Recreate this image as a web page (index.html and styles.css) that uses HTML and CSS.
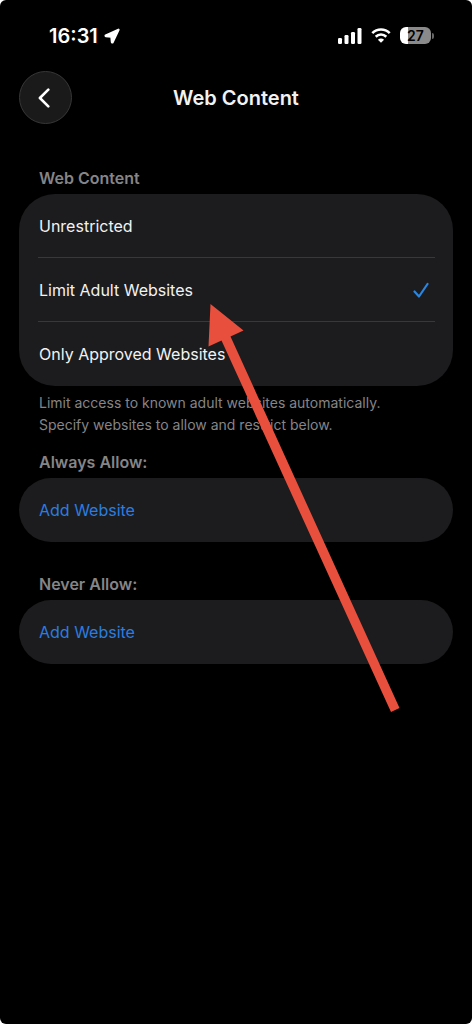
FILE: index.html
```html
<!DOCTYPE html>
<html lang="en">
<head>
<meta charset="utf-8">
<meta name="viewport" content="width=device-width, initial-scale=1">
<title>Web Content</title>
<link rel="stylesheet" href="styles.css">
</head>
<body>
<div class="screen">
  <div class="status">
    <div class="status-side">
      <span class="time">16:31</span>
      <svg class="location" viewBox="0 0 16 16" aria-hidden="true"><path d="M14.400 1.400 1.600 7.200C1.100 7.500 1.200 8.300 1.800 8.400L7.100 9 7.600 14.200C7.700 14.900 8.600 15 8.900 14.400L14.800 1.800C14.900 1.500 14.700 1.300 14.400 1.400Z"/></svg>
    </div>
    <div class="status-side status-icons">
      <svg class="signal" viewBox="0 0 24 16" aria-hidden="true"><rect x="0" y="10" width="4" height="6" rx="1.200"/><rect x="6.500" y="7" width="4" height="9" rx="1.200"/><rect x="13" y="4" width="4" height="12" rx="1.200"/><rect x="19.500" y="0" width="4" height="16" rx="1.200"/></svg>
      <svg class="wifi" viewBox="0 0 20 15" aria-hidden="true"><path class="wifi-arc" d="M1.300 5.100C6.200.2 13.800.2 18.700 5.100M4.700 8.700C7.700 5.800 12.300 5.800 15.300 8.700"/><path d="M10 14.800 6.900 11.700C8.600 10.100 11.400 10.100 13.100 11.700Z"/></svg>
      <div class="battery"><span class="battery-body">27</span><span class="battery-cap"></span></div>
    </div>
  </div>

  <header class="nav">
    <button class="back" type="button" aria-label="Back"><svg viewBox="0 0 12 20" aria-hidden="true"><path d="M10.300 1.700 1.900 10 10.300 18.300"/></svg></button>
    <h1 class="title">Web Content</h1>
  </header>

  <main class="content">
    <section class="group">
      <h2 class="label" id="mode">Web Content</h2>
      <div class="card" role="radiogroup" aria-labelledby="mode">
        <label class="row"><input class="radio" type="radio" name="mode"><span>Unrestricted</span><svg class="check" viewBox="0 0 16 16" aria-hidden="true"><path d="M1.500 9.500 6 14.500 14.500 2"/></svg></label>
        <label class="row"><input class="radio" type="radio" name="mode" checked><span>Limit Adult Websites</span><svg class="check" viewBox="0 0 16 16" aria-hidden="true"><path d="M1.500 9.500 6 14.500 14.500 2"/></svg></label>
        <label class="row"><input class="radio" type="radio" name="mode"><span>Only Approved Websites</span><svg class="check" viewBox="0 0 16 16" aria-hidden="true"><path d="M1.500 9.500 6 14.500 14.500 2"/></svg></label>
      </div>
      <p class="note">Limit access to known adult websites automatically. Specify websites to allow and restrict below.</p>
    </section>
    <section class="group">
      <h2 class="label">Always Allow:</h2>
      <div class="card"><button class="row add" type="button">Add Website</button></div>
    </section>
    <section class="group group-spaced">
      <h2 class="label">Never Allow:</h2>
      <div class="card"><button class="row add" type="button">Add Website</button></div>
    </section>
  </main>

  <svg class="pointer" viewBox="0 0 192 410" aria-hidden="true"><path d="M2.500 1 35.500 27.500 22.500 33.500 191.500 405 183 409 13.500 37.500.5 43.500Z"/></svg>
</div>
</body>
</html>
```
FILE: styles.css
```css
* {
  box-sizing: border-box;
}

body {
  margin: 0;
  background: #fff;
  color: #f2f2f2;
  font-family: Inter, "Liberation Sans", sans-serif;
  font-size: 16px;
}

.screen {
  position: relative;
  min-height: 100vh;
  background: #000;
  border-radius: 6px;
  overflow: hidden;
}

.status {
  display: flex;
  align-items: center;
  justify-content: space-between;
  height: 71px;
  padding: 0 38px 0 49px;
}

.status-side {
  display: flex;
  align-items: center;
  gap: 6px;
}

.status-side svg {
  fill: #fff;
}

.time {
  color: #fff;
  font-size: 20px;
  font-weight: 600;
}

.status-side .location {
  width: 16px;
  height: 16px;
  stroke: #fff;
  stroke-width: 1.6;
  stroke-linejoin: round;
}

.status-icons {
  gap: 9px;
}

.signal {
  width: 24px;
  height: 16px;
}

.wifi {
  width: 20px;
  height: 15px;
}

.status-side .wifi-arc {
  fill: none;
  stroke: #fff;
  stroke-width: 2.6;
}

.battery {
  display: flex;
  align-items: center;
  gap: 1px;
}

.battery-body {
  width: 31px;
  border-radius: 6px;
  background: linear-gradient(90deg, #fff 27%, #8a8a8a 27%);
  color: #000;
  font-size: 14px;
  font-weight: 600;
  line-height: 17px;
  text-align: center;
}

.battery-cap {
  width: 2px;
  height: 6px;
  border-radius: 0 2px 2px 0;
  background: #666;
}

.nav {
  display: grid;
  grid-template-columns: 53px 1fr 53px;
  align-items: center;
  padding: 0 19px;
}

.back {
  display: flex;
  align-items: center;
  justify-content: center;
  width: 53px;
  height: 53px;
  padding: 0 3px 0 0;
  border: 1px solid #373737;
  border-radius: 50%;
  background: #1a1a1a;
}

.back svg {
  width: 12px;
  height: 20px;
  fill: none;
  stroke: #fff;
  stroke-width: 2.6;
  stroke-linecap: round;
  stroke-linejoin: round;
}

.title {
  margin: 0;
  font-size: 20px;
  font-weight: 600;
  line-height: 24px;
  text-align: center;
}

.content {
  padding: 43px 19px 0;
}

.group-spaced {
  padding-top: 31px;
}

.label {
  margin: 0;
  padding: 0 20px 5px;
  color: #858588;
  font-size: 16px;
  font-weight: 600;
  line-height: 22px;
}

.card {
  border-radius: 36px;
  background: #1c1c1e;
}

.row {
  display: flex;
  align-items: center;
  position: relative;
  width: 100%;
  min-height: 64px;
  padding: 0 24px 0 20px;
}

.row + .row::before {
  content: "";
  position: absolute;
  top: -1px;
  left: 19px;
  right: 18px;
  height: 1px;
  background: #38383a;
}

.radio {
  position: absolute;
  inset: 0;
  margin: 0;
  appearance: none;
}

.check {
  width: 16px;
  height: 16px;
  margin-left: auto;
  visibility: hidden;
  fill: none;
  stroke: #2b86e0;
  stroke-width: 2.2;
  stroke-linecap: round;
  stroke-linejoin: round;
}

.radio:checked ~ .check {
  visibility: visible;
}

.add {
  border: 0;
  border-radius: 36px;
  background: none;
  color: #2b7de0;
  font: inherit;
  text-align: left;
}

.note {
  max-width: 400px;
  margin: 0;
  padding: 6px 20px 15px;
  color: #858588;
  font-size: 14px;
  line-height: 22px;
}

.pointer {
  position: absolute;
  top: 303px;
  left: 208px;
  width: 192px;
  height: 410px;
  fill: #e84f3d;
  pointer-events: none;
}
```
